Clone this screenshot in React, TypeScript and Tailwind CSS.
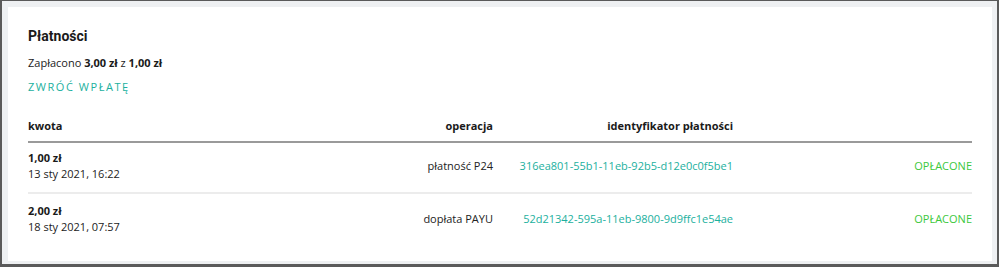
import React from "react";

const rows = [
  { amount: "1,00 zł", date: "13 sty 2021, 16:22", op: "płatność P24", id: "316ea801-55b1-11eb-92b5-d12e0c0f5be1", status: "OPŁACONE" },
  { amount: "2,00 zł", date: "18 sty 2021, 07:57", op: "dopłata PAYU", id: "52d21342-595a-11eb-9800-9d9ffc1e54ae", status: "OPŁACONE" },
];

export default function App() {
  return (
    <div
      className="w-[999px] h-[267px] box-border border-l-2 border-t border-r-2 border-b-[3px] border-[#5a5a5a] bg-[#eef0f2] pl-[6px] pt-[6px] pr-[5px] pb-[3px] text-[#222]"
      style={{ fontFamily: '"Open Sans", "Liberation Sans", sans-serif' }}
    >
      <div className="bg-white h-full box-border pt-[17px] px-5">
        <h2 className="text-[14px] leading-6 font-bold text-[#1a1a1a]" style={{ fontFamily: 'Roboto, "Liberation Sans", sans-serif' }}>
          Płatności
        </h2>
        <p className="mt-[5px] text-[11px] leading-5 text-[#222]">
          Zapłacono <span className="font-bold text-[#1a1a1a]">3,00 zł</span> z <span className="font-bold text-[#1a1a1a]">1,00 zł</span>
        </p>
        <button className="mt-[4px] block text-[11px] leading-5 tracking-[0.14em] text-[#1bb09e]">ZWRÓĆ WPŁATĘ</button>

        <div className="mt-[19px] grid grid-cols-[265px_200px_240px_239px] text-[11px] leading-5 font-bold text-[#1a1a1a] border-b-2 border-[#9a9a9a] pb-[5px]">
          <div>kwota</div>
          <div className="text-right">operacja</div>
          <div className="text-right">identyfikator płatności</div>
          <div></div>
        </div>

        {rows.map((r, i) => (
          <div
            key={i}
            className={`grid grid-cols-[265px_200px_240px_239px] items-center text-[11px] ${i === 0 ? "pt-[7px] pb-[10px] border-b-2 border-[#ececec]" : "pt-[9px]"}`}
          >
            <div className="leading-4">
              <div className="font-bold text-[#1a1a1a]">{r.amount}</div>
              <div className="text-[#222]">{r.date}</div>
            </div>
            <div className="text-right text-[#222]">{r.op}</div>
            <div className="text-right text-[#1bb09e]">{r.id}</div>
            <div className="text-right text-[11px] font-medium text-[#3cc83c]">{r.status}</div>
          </div>
        ))}
      </div>
    </div>
  );
}
